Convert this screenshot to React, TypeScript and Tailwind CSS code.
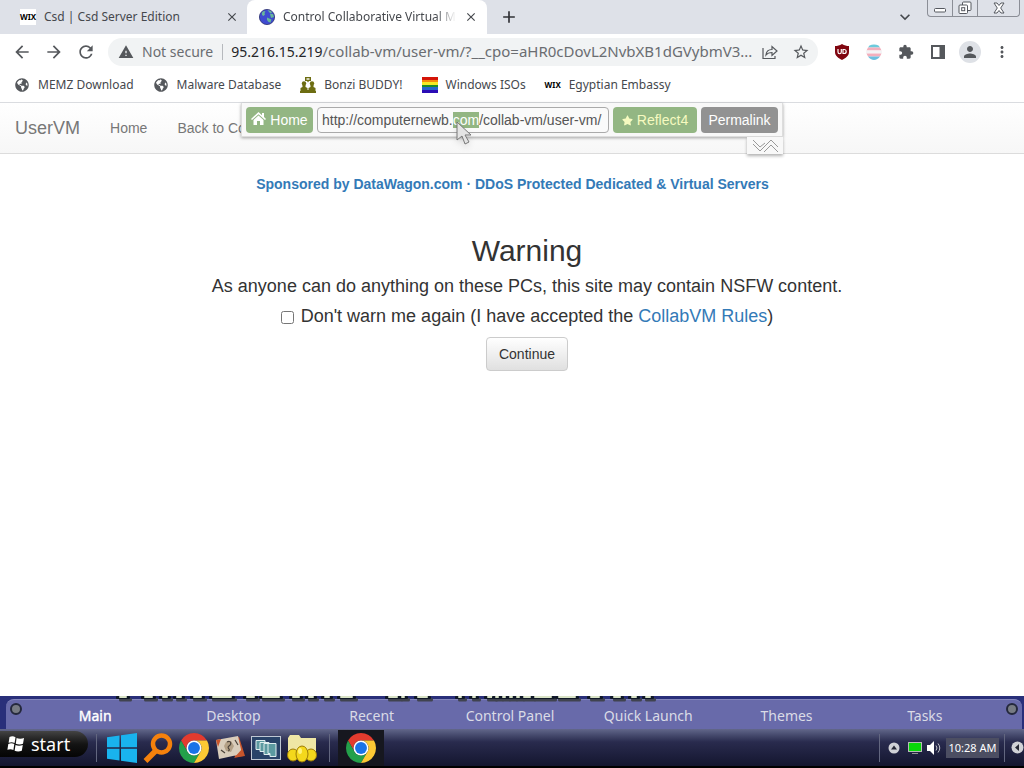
import { useEffect, useRef } from "react";
import {
  MdArrowBack,
  MdArrowForward,
  MdClose,
  MdExtension,
  MdMoreVert,
  MdPerson,
  MdRefresh,
  MdStarBorder,
  MdWarning,
  MdAdd,
  MdKeyboardArrowDown,
} from "react-icons/md";
import { FaGlobeAmericas, FaStar } from "react-icons/fa";

const uiFont = "font-['Noto_Sans','Open_Sans',sans-serif]";
const pageFont = "font-['Liberation_Sans',Arial,sans-serif]";

const dockItems = ["Main", "Desktop", "Recent", "Control Panel", "Quick Launch", "Themes", "Tasks"];

// x and width of each piece of the wallpaper lettering that shows above the dock
const letterBits = [
  [9, 8], [34, 9], [52, 6], [66, 6], [83, 9], [102, 20],
  [136, 9], [152, 18], [182, 8], [198, 6], [214, 6], [230, 13],
  [278, 10], [291, 4], [307, 11], [348, 4], [362, 4], [377, 6],
  [385, 4], [392, 4], [399, 4], [406, 4], [413, 8], [424, 18],
  [448, 18], [480, 10], [503, 8], [521, 6], [535, 6],
];

function WixIcon() {
  return <span className="flex h-4 w-4 shrink-0 items-center justify-center text-[8px] font-bold text-black">WIX</span>;
}

function EarthIcon() {
  return (
    <svg viewBox="0 0 16 16" className="h-4 w-4 shrink-0">
      <circle cx="8" cy="8" r="7.6" fill="#3f4bd0" stroke="#2a2e70" strokeWidth="0.8" />
      <path d="M3 3.500 5 2l1.500.500-1 1.500.500 1.500L4.500 7 3 6ZM8.500 1 12 2l1 2-1.500.500L10.500 3.500ZM11 5l3 0 1 3-3 1ZM8 8.500l4.500 2-1 3-2-.500L8 11Z" fill="#68b79a" />
    </svg>
  );
}

function BonziIcon() {
  return (
    <svg viewBox="0 0 16 16" className="h-4 w-4 shrink-0" fill="#6d6d12">
      <path d="M5 0h6v4H9L8 5.500 7 4H5Z" />
      <path d="M6.500 1.300h3v1.400h-3Z" fill="#fff" />
      <circle cx="4" cy="6.500" r="2.200" />
      <circle cx="12" cy="6.500" r="2.200" />
      <path d="M2.500 8h3v2l2 1v2h1v-2l2-1V8h3v2l2 1v4H.500v-4l2-1Z" />
      <path d="M0 14h16v2H0Z" />
    </svg>
  );
}

function RainbowIcon() {
  return (
    <svg viewBox="0 0 16 16" className="h-4 w-4 shrink-0">
      <path d="M0 0h16v3H0Z" fill="#d41408" />
      <path d="M0 3h16v3H0Z" fill="#f58a0a" />
      <path d="M0 5h16v3H0Z" fill="#f4ea25" />
      <path d="M0 8h16v3H0Z" fill="#188a2b" />
      <path d="M0 10h16v3H0Z" fill="#2464cf" />
      <path d="M0 13h16v3H0Z" fill="#2a0cb5" />
    </svg>
  );
}

function ChromeIcon() {
  return (
    <svg viewBox="0 0 48 48" className="h-[30px] w-[30px]">
      <path d="M24 12H44.780A24 24 0 0 0 3.220 12L13.600 30A12 12 0 0 1 24 12" fill="#e33b2e" />
      <path d="M13.600 30 3.220 12A24 24 0 0 0 24 48L34.400 30A12 12 0 0 1 13.600 30" fill="#23a04a" />
      <path d="M34.400 30 24 48A24 24 0 0 0 44.780 12H24A12 12 0 0 1 34.400 30" fill="#fcc934" />
      <circle cx="24" cy="24" r="12" fill="#fff" />
      <circle cx="24" cy="24" r="9.500" fill="#1a73e8" />
    </svg>
  );
}

function TabStrip() {
  return (
    <div className="flex h-[34px] bg-[#dee1e8] text-xs text-[#45484d]">
      <div className="flex w-[247px] items-center gap-2 pl-5 pr-2">
        <span className="bg-white"><WixIcon /></span>
        <span className="flex-1 whitespace-nowrap">Csd | Csd Server Edition</span>
        <button aria-label="Close Csd tab"><MdClose size={14} /></button>
      </div>
      <div className="flex w-[240px] items-center gap-2 rounded-t-lg bg-white pl-3 pr-[9px]">
        <EarthIcon />
        <span className="flex-1 whitespace-nowrap [mask-image:linear-gradient(to_right,black_88%,transparent)]">
          Control Collaborative Virtual M
        </span>
        <button aria-label="Close Control tab"><MdClose size={14} /></button>
      </div>
      <button aria-label="New tab" className="ml-3 text-[#303236]"><MdAdd size={20} /></button>
      <div className="flex-1" />
      <button aria-label="Search tabs" className="mr-3"><MdKeyboardArrowDown size={20} /></button>
      <div className="mr-1 flex h-[17px] rounded-b border border-t-0 border-[#8b8e96]">
        <button aria-label="Minimize" className="flex w-[25px] items-center justify-center border-r border-[#8b8e96]">
          <svg width="12" height="16" viewBox="0 0 12 16">
            <rect x="0.500" y="8.500" width="11" height="3.500" rx="1" fill="#fff" stroke="#55585f" />
          </svg>
        </button>
        <button aria-label="Restore" className="flex w-[25px] items-center justify-center border-r border-[#8b8e96]">
          <svg width="14" height="14" viewBox="0 0 14 14" fill="#fff" stroke="#55585f">
            <rect x="4.500" y="1" width="8.500" height="8.500" rx="1" />
            <rect x="1" y="4" width="8.500" height="8.500" rx="1" />
            <rect x="3.700" y="6.700" width="3" height="3" />
          </svg>
        </button>
        <button aria-label="Close window" className="flex w-[41px] items-center justify-center">
          <svg width="12" height="12" viewBox="0 0 12 12">
            <path d="M1 1h3l2 2.500L8 1h3L7.700 6 11 11H8L6 8.500 4 11H1l3.300-5Z" fill="#fff" stroke="#55585f" />
          </svg>
        </button>
      </div>
    </div>
  );
}

function Toolbar() {
  return (
    <div className="flex h-9 items-center gap-4 bg-white pl-3 pr-[14px] text-[#55585c]">
      <div className="flex gap-3">
        <button aria-label="Back"><MdArrowBack size={20} /></button>
        <button aria-label="Forward"><MdArrowForward size={20} /></button>
        <button aria-label="Reload"><MdRefresh size={20} /></button>
      </div>
      <div className="-ml-1 flex h-7 min-w-0 flex-1 items-center rounded-full bg-[#f1f3f4] pl-[10px] pr-2 text-sm">
        <MdWarning size={16} className="shrink-0" />
        <span className="ml-2 whitespace-nowrap text-[#6a6d71]">Not secure</span>
        <span className="ml-[9px] mr-2 h-4 w-px shrink-0 bg-[#b6b9bd]" />
        <span className="flex-1 whitespace-nowrap text-[#6a6d71]">
          <span className="text-[#242528]">95.216.15.219</span>
          <span className="text-[15px]">/collab-vm/user-vm/?__cpo=aHR0cDovL2NvbXB1dGVybmV3...</span>
        </span>
        <button aria-label="Share" className="ml-1">
          <svg width="16" height="16" viewBox="0 0 16 16" fill="none" stroke="currentColor" strokeWidth="1.200">
            <path d="M1 4v10.500h12V12" />
            <path d="M4 11c.300-4 2.500-5.500 6-5.500V2.500l5 4.500-5 4.500V8.500c-3 0-4.500.500-6 2.500Z" />
          </svg>
        </button>
        <button aria-label="Bookmark" className="ml-[14px]"><MdStarBorder size={18} /></button>
      </div>
      <button aria-label="uBlock">
        <svg width="16" height="16" viewBox="0 0 16 16">
          <path d="M8 0c2.500 1.500 4.500 2 7 2v6c0 4-3.500 6-7 8-3.500-2-7-4-7-8V2c2.500 0 4.500-.500 7-2Z" fill="#800610" />
          <path d="M4 5v3c0 2.300 3.300 2.300 3.300 0V5M9 5v4.500h1.200a2 2 0 1 0 0-4H9" fill="none" stroke="#fff" strokeWidth="1.200" />
        </svg>
      </button>
      <button aria-label="Pride extension">
        <svg width="16" height="16" viewBox="0 0 16 16">
          <path d="M3.500 1.500C6 0 10 0 12.500 1.500L14 3.500H2Z" fill="#6ccbdc" />
          <path d="M2 3.500h12l1.500 3H.500Z" fill="#f3afbd" />
          <path d="M0 6.500h16v3H0Z" fill="#f4f4f6" />
          <path d="M.500 9.500h15L14 12.500H2Z" fill="#f3afbd" />
          <path d="M2 12.500h12C11 17 5 17 2 12.500Z" fill="#6cbfdf" />
        </svg>
      </button>
      <button aria-label="Extensions"><MdExtension size={16} /></button>
      <button aria-label="Side panel">
        <svg width="16" height="16" viewBox="0 0 16 16">
          <path d="M1 1h14v14H1Z M3 3v10h6.500V3Z" fill="currentColor" fillRule="evenodd" />
        </svg>
      </button>
      <button aria-label="Profile" className="-mx-[3px] flex h-[22px] w-[22px] items-center justify-center rounded-full bg-[#dee1e6]">
        <MdPerson size={18} />
      </button>
      <button aria-label="Menu"><MdMoreVert size={18} className="-mx-px" /></button>
    </div>
  );
}

const bookmarks = [
  { label: "MEMZ Download", icon: <FaGlobeAmericas size={14} className="mx-px" /> },
  { label: "Malware Database", icon: <FaGlobeAmericas size={14} className="mx-px" /> },
  { label: "Bonzi BUDDY!", icon: <BonziIcon /> },
  { label: "Windows ISOs", icon: <RainbowIcon /> },
  { label: "Egyptian Embassy", icon: <WixIcon /> },
];

function SiteNav() {
  const urlRef = useRef<HTMLInputElement>(null);

  useEffect(() => {
    // the "com" part starts out selected
    urlRef.current?.focus();
    urlRef.current?.setSelectionRange(20, 23);
  }, []);

  return (
    <div className="relative">
      <nav className="flex h-[51px] items-center border-b border-[#dcdcdc] bg-linear-to-b from-white to-[#f7f7f7] pl-[15px] text-sm text-[#777]">
        <a href="#" className="mr-[30px] text-lg leading-5">UserVM</a>
        <a href="#" className="mr-[30px]">Home</a>
        <a href="#">Back to Co</a>
      </nav>

      {/* proxy bar floating over the page */}
      <div className="absolute left-1/2 top-0 -ml-[271px] w-[542px]">
        <div className="flex h-[34px] gap-1 border border-t-0 border-[#ddd] bg-[#f8f8f8] px-1 pt-1 text-sm shadow-[0_1px_3px_rgba(0,0,0,0.35)]">
          <button className="flex h-[26px] w-[67px] shrink-0 items-center justify-center gap-1 rounded bg-[#93b683] text-white">
            <svg width="15" height="15" viewBox="0 0 15 15" fill="currentColor" className="mb-1">
              <path d="M7.500 1 11 4.200V2h2v4l2 2-1 1-6.500-5.800L1 9 0 8Z" />
              <path d="M2.500 9l5-4.500 5 4.500v5H9v-4H6v4H2.500Z" />
            </svg>
            Home
          </button>
          <input
            ref={urlRef}
            aria-label="Address"
            defaultValue="http://computernewb.com/collab-vm/user-vm/"
            className="h-[26px] min-w-0 flex-1 rounded border border-[#aaa] bg-[#fafafa] px-1 text-[#555] outline-none selection:bg-[#93b683] selection:text-white"
          />
          <button className="flex h-[26px] w-[84px] shrink-0 items-center justify-center gap-1 rounded bg-[#93b683] text-[#f6fac0]">
            <FaStar size={11} /> Reflect4
          </button>
          <button className="h-[26px] w-[77px] shrink-0 rounded bg-[#929292] text-white">Permalink</button>
        </div>
        <button
          aria-label="Collapse bar"
          className="ml-auto flex h-[17px] w-9 items-center justify-center bg-[#f8f8f8] shadow-[0_2px_3px_rgba(0,0,0,0.3)]"
        >
          <svg width="26" height="14" viewBox="0 0 26 14" fill="none" stroke="#999">
            <path d="M1 1l7 7 5-4M1 5l7 7L19 1l7 7M12 13l7-7 7 7" />
          </svg>
        </button>
      </div>

      <svg className="absolute left-1/2 top-[18px] -ml-[56px] drop-shadow-md" width="17" height="26" viewBox="0 0 17 26">
        <path d="M1 1 15 14H9l4 7-4 2-3-8-5 4Z" fill="#e4e4e4" stroke="#777" />
      </svg>
    </div>
  );
}

function Dock() {
  return (
    <div className="relative flex h-[33px] flex-col overflow-hidden bg-[#292f7a] pl-1.5 pr-0.5 pt-[3px]">
      <div className="flex flex-1 rounded-t-lg border-t border-[#8588bd] bg-[#686aaa] px-1 pt-[3px]">
        <span className="h-3 w-3 rounded-full border-2 border-[#24283c] bg-[#777b83]" />
        <div className="grid flex-1 grid-cols-7 pl-1 pr-3 text-center text-sm leading-6 text-[#dadbe6] [text-shadow:1px_1px_1px_#111,-1px_0_1px_#111,0_-1px_1px_#111]">
          {dockItems.map((item, i) => (
            <button key={item} className={i === 0 ? "text-white [-webkit-text-stroke:0.4px_white]" : ""}>{item}</button>
          ))}
        </div>
        <span className="h-3 w-3 rounded-full border-2 border-[#24283c] bg-[#777b83]" />
      </div>
      {/* wallpaper lettering and its shadow peeking over the panel edge */}
      <svg className="absolute left-[110px] top-0" width="560" height="6" viewBox="0 0 560 6">
        {letterBits.map(([x, w]) => (
          <g key={x}>
            <rect x={x} y="2" width={w + 5} height="3.500" rx="1.500" fill="#40434f" />
            <rect x={x - 3} y="0" width={w + 6} height="3" rx="1" fill="#101827" />
            <rect x={x} y="0" width={w} height="2" rx="1" fill="#d9e3c6" />
          </g>
        ))}
      </svg>
    </div>
  );
}

function Taskbar() {
  return (
    <div className="flex h-[39px] items-center border-b-2 border-black bg-linear-to-b from-[#62678a] via-[#292b4e] via-35% to-[#14162f] text-white">
      <button className="mb-2 flex h-[26px] w-[88px] items-center gap-1.5 rounded-r-full bg-linear-to-b from-[#444] via-[#141414] to-[#050505] pl-[7px] text-lg">
        <svg width="18" height="18" viewBox="0 0 18 18" fill="#fff">
          <path d="M2.500 2c2-1 4-1 6 .200L7.600 8c-2-1-4-1-6-.200ZM9.600 3c2 1 5 1 7.400 0l-1 5.800c-2 1-5 1-7.200 0ZM1.300 9c2-1 4-1 6 0l-.900 6c-2-1-4-1-6-.200ZM8.500 10c2 1 5 1 7.300 0l-1 5.800c-2.300 1-5 1-7.200 0Z" />
        </svg>
        start
      </button>
      <span className="ml-2 h-7 w-px bg-[#62667f]" />
      <div className="ml-2.5 flex items-center gap-1.5">
        <button aria-label="Windows">
          <svg width="30" height="30" viewBox="0 0 30 30" fill="#19b3ee">
            <path d="M0 4.300 12.500 2.500V14.300H0ZM14 2.300 30 0V14.300H14ZM0 15.700h12.500V27.500L0 25.700ZM14 15.700h16V30l-16-2.300Z" />
          </svg>
        </button>
        <button aria-label="Search">
          <svg width="30" height="30" viewBox="0 0 30 30" fill="none" stroke="#f5810c">
            <circle cx="18.500" cy="11" r="8.500" strokeWidth="4.500" />
            <path d="M12.500 18 2.500 28" strokeWidth="5.500" />
          </svg>
        </button>
        <button aria-label="Chrome"><ChromeIcon /></button>
        <button aria-label="Artwork">
          <svg width="30" height="30" viewBox="0 0 30 30">
            <path d="M15 6 24 4 30 23 20 24Z" fill="#c8552c" />
            <path d="M1 7 23 3 27 21 4 26Z" fill="#d9cdbb" />
            <path d="M1 7 6 6 3 14ZM19 25 27 16 29 23Z" fill="#c8552c" />
            <path d="M11 9l5-1 3 5-3 6-5-1-2-5Z" fill="#b3a086" />
            <path d="M12 9c4-2 5 2 2 4s3 4-1 5M6 17l4 3M20 7l3 5" fill="none" stroke="#4c433a" strokeWidth="1.200" />
          </svg>
        </button>
        <button aria-label="Switch windows">
          <svg width="30" height="30" viewBox="0 0 30 30">
            <rect x="0.500" y="3.500" width="29" height="23" fill="#294368" stroke="#bfc8d3" />
            <g stroke="#dfeeee" fill="#5c9aa0">
              <path d="M5 7.500h9v9H5Z" />
              <path d="M9 9.500h9v9H9Z" />
              <path d="M13 10.500h8v11h-8Z" />
              <path d="M17 10.500h8v13h-6v-3h-2Z" />
            </g>
          </svg>
        </button>
        <button aria-label="Eggs folder">
          <svg width="30" height="30" viewBox="0 0 30 30">
            <path d="M1 5 3 2h9l2 3h15v20H1Z" fill="#efe7a5" />
            <g fill="#f4d81c" stroke="#9c7b08">
              <ellipse cx="6" cy="22" rx="5.500" ry="6" />
              <ellipse cx="24" cy="22" rx="5.500" ry="6" />
              <ellipse cx="15" cy="21" rx="6" ry="8" />
            </g>
            <ellipse cx="13" cy="18" rx="2" ry="3" fill="#fff27a" />
          </svg>
        </button>
      </div>
      <span className="ml-3 h-7 w-px bg-[#62667f]" />
      <button aria-label="Chrome window" className="ml-2 flex h-9 w-[46px] items-center justify-center bg-[#16171f]">
        <ChromeIcon />
      </button>
      <div className="flex-1" />
      <span className="h-7 w-px bg-[#62667f]" />
      <div className="flex items-center gap-2 pl-2">
        <button aria-label="Show hidden icons">
          <svg width="12" height="12" viewBox="0 0 12 12">
            <circle cx="6" cy="6" r="5.500" fill="#d0d1d6" />
            <path d="M3 7.500 6 3.500l3 4Z" fill="#252734" />
          </svg>
        </button>
        <svg width="14" height="14" viewBox="0 0 14 14">
          <rect x="0.500" y="1.500" width="13" height="9" fill="#08d80a" stroke="#b6bab6" />
          <path d="M4 12.500h6" stroke="#8f9492" />
        </svg>
        <svg width="16" height="16" viewBox="0 0 16 16" className="-ml-1">
          <path d="M1 5h3l4-4v14l-4-4H1Z" fill="#fff" />
          <path d="M10 5.500q2 2.500 0 5M12 3.500q3.500 4.500 0 9" fill="none" stroke="#c4c5cc" />
        </svg>
      </div>
      <time className="ml-1 h-5 w-[53px] whitespace-nowrap bg-[#4c4e62] text-center text-[11px] leading-5">10:28 AM</time>
      <span className="ml-[5px] h-7 w-px bg-[#62667f]" />
      <button aria-label="Collapse tray" className="ml-1.5">
        <svg width="13" height="13" viewBox="0 0 13 13">
          <circle cx="6.500" cy="6.500" r="6" fill="#d0d1d6" />
          <path d="M8 3 4 6.500 8 10Z" fill="#252734" />
        </svg>
      </button>
    </div>
  );
}

export default function App() {
  return (
    <div className={`flex min-h-screen flex-col bg-white ${uiFont}`}>
      <header>
        <TabStrip />
        <Toolbar />
        <div className="flex h-[33px] items-center gap-[19px] border-b border-[#dadce0] pb-0.5 pl-[14px] text-xs text-[#45484d]">
          {bookmarks.map((b) => (
            <a key={b.label} href="#" className="flex items-center gap-2 whitespace-nowrap">
              <span className="text-[#55585c]">{b.icon}</span>
              {b.label}
            </a>
          ))}
        </div>
      </header>

      <main className={`flex-1 text-[#333] ${pageFont}`}>
        <SiteNav />
        <p className="mt-5 pl-px text-center text-sm leading-5">
          <a href="#" className="font-bold text-[#337ab7]">
            Sponsored by DataWagon.com · DDoS Protected Dedicated &amp; Virtual Servers
          </a>
        </p>
        <section className="mt-[41px] pl-[30px] text-center text-lg leading-[30px]">
          <h1 className="mb-1 text-3xl leading-8">Warning</h1>
          <p>As anyone can do anything on these PCs, this site may contain NSFW content.</p>
          <div className="flex items-center justify-center gap-[7px]">
            <input id="no-warn" type="checkbox" className="mt-0.5 h-[13px] w-[13px]" />
            <label htmlFor="no-warn">
              Don't warn me again (I have accepted the <a href="#" className="text-[#337ab7]">CollabVM Rules</a>)
            </label>
          </div>
          <button className="mx-auto mt-1.5 block h-[34px] rounded border border-[#ccc] bg-linear-to-b from-white to-[#e0e0e0] px-3 text-sm">
            Continue
          </button>
        </section>
      </main>

      <footer>
        <Dock />
        <Taskbar />
      </footer>
    </div>
  );
}
